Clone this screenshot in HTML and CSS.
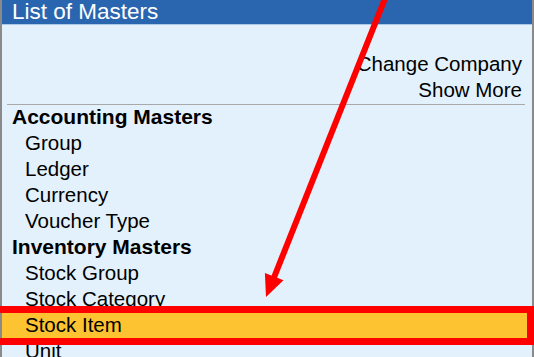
FILE: index.html
```html
<!DOCTYPE html>
<html lang="en">
<head>
    <meta charset="UTF-8">
    <meta name="viewport" content="width=device-width, initial-scale=1.0">
    <title>List of Masters</title>
    <link rel="stylesheet" href="styles.css">
</head>
<body>
    <div class="window">
        <div class="title">List of Masters</div>
        <div class="content">
            <div class="actions">
                <div class="action">Change Company</div>
                <div class="action">Show More</div>
            </div>
            <div class="sep"></div>
            <div class="group-title">Accounting Masters</div>
            <div class="item">Group</div>
            <div class="item">Ledger</div>
            <div class="item">Currency</div>
            <div class="item">Voucher Type</div>
            <div class="group-title">Inventory Masters</div>
            <div class="item">Stock Group</div>
            <div class="item">Stock Category</div>
            <div class="item selected">Stock Item</div>
            <div class="item">Unit</div>
        </div>
    </div>

    <div class="mark-box"></div>
    <svg class="arrow" width="534" height="357" viewBox="0 0 534 357">
        <line x1="386" y1="-4" x2="273" y2="280" stroke="#ff0000" stroke-width="6"/>
        <polygon points="266,297 283.5,280.3 264.9,272.9" fill="#ff0000"/>
    </svg>
</body>
</html>
```

FILE: styles.css
```css
body {
    margin: 0;
    width: 534px;
    height: 357px;
    overflow: hidden;
    position: relative;
    font-family: 'Liberation Sans', Arial, sans-serif;
    font-size: 20.5px;
    color: #000;
    background: #e3f1fc;
}
.window {
    height: 357px;
    box-sizing: border-box;
    border-left: 2px solid #8a8a8a;
    border-right: 2px solid #8a8a8a;
    background: #e3f1fc;
}
.title {
    height: 24px;
    line-height: 24px;
    font-size: 22.5px;
    background: #2a66b0;
    color: #fff;
    padding-left: 10px;
    border-bottom: 1px solid #a9c8ea;
}
.content {
    padding-top: 27px;
}
.actions {
    text-align: right;
    padding-right: 10px;
}
.action {
    height: 26px;
    line-height: 24px;
}
.sep {
    height: 1px;
    background: #a8a8a8;
    margin: 0 7px 0 5px;
}
.group-title, .item {
    height: 26px;
    line-height: 24px;
    padding-left: 10px;
}
.group-title {
    font-weight: bold;
    font-size: 21px;
}
.item {
    padding-left: 23px;
}
.item.selected {
    background: #fec330;
    height: 25px;
    border-bottom: 1px solid #fde3a0;
}
.mark-box {
    position: absolute;
    left: -10px;
    top: 306px;
    width: 544px;
    height: 39px;
    box-sizing: border-box;
    border: 7px solid #ff0000;
}
.arrow {
    position: absolute;
    left: 0;
    top: 0;
}
```
